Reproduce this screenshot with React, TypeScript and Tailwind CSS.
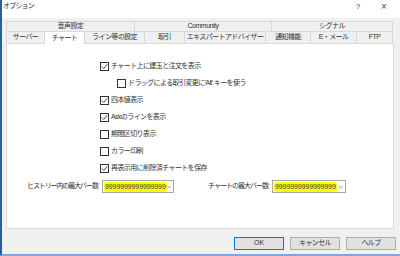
const font = "font-['Liberation_Sans','Noto_Sans_CJK_JP',sans-serif]";

function Check({ checked, label, indent }: { checked: boolean; label: string; indent?: boolean }) {
  return (
    <div className={indent ? "flex items-center h-[17px] pl-[17px]" : "flex items-center h-[17px]"}>
      <span className="w-[9px] h-[9px] border border-[#333333] bg-white flex items-center justify-center shrink-0">
        {checked && (
          <svg viewBox="0 0 7 7" className="w-[7px] h-[7px]">
            <path d="M0.8 3.6 L2.7 5.5 L6.3 1.2" stroke="#333333" strokeWidth="0.9" fill="none" />
          </svg>
        )}
      </span>
      <span className="ml-[2px] tracking-[-0.6px] whitespace-nowrap">{label}</span>
    </div>
  );
}

function Combo({ w }: { w: string }) {
  return (
    <div className={`${w} h-[13px] border border-[#a8a8a8] bg-white flex items-center pl-[1px] pr-[2px] shrink-0`}>
      <span className="bg-[#ffff00] rounded-[3px] px-[1px] leading-[10px] text-[7px] tracking-[-0.1px]">9999999999999999</span>
      <svg viewBox="0 0 6 4" className="w-[5px] h-[4px] ml-auto">
        <path d="M0.5 0.8 L3 3.2 L5.5 0.8" stroke="#555" strokeWidth="0.8" fill="none" />
      </svg>
    </div>
  );
}

const topTabs = [
  { label: "音声設定", w: "w-[129px]" },
  { label: "Community", w: "w-[137px]" },
  { label: "シグナル", w: "w-[121px]" },
];

const tabs = [
  { label: "サーバー", w: "w-[39px]" },
  { label: "チャート", w: "w-[40px]", active: true },
  { label: "ライン等の設定", w: "w-[60px]" },
  { label: "取引", w: "w-[40px]" },
  { label: "エキスパートアドバイザー", w: "w-[81px]" },
  { label: "通知機能", w: "w-[45px]" },
  { label: "E・メール", w: "w-[46px]" },
  { label: "FTP", w: "w-[36px]" },
];

export default function App() {
  return (
    <div className={`w-[400px] h-[256px] overflow-hidden bg-[#f0f0f0] border-l-2 border-l-[#2f5c9c] border-b-2 border-b-[#7aa9e0] flex flex-col text-[7px] text-[#333] ${font}`}>
      <div className="h-[13px] bg-white flex items-center shrink-0">
        <span className="pl-[1px] tracking-[-0.8px]">オプション</span>
        <span className="ml-auto w-[26px] text-center text-[8px] text-[#444]">?</span>
        <span className="w-[26px] text-center text-[10px] text-[#444] mr-[3px]">×</span>
      </div>
      <div className="h-[5px] bg-white shrink-0" />

      <div className="pt-[3px] pl-[4px] w-[392px]">
        <div className="flex h-[10px]">
          {topTabs.map((t, i) => (
            <div
              key={t.label}
              className={`${t.w} ${i === 0 ? "border-l" : ""} border-t border-r border-[#d9d9d9] flex items-center justify-center tracking-[-0.5px] whitespace-nowrap`}
            >
              {t.label}
            </div>
          ))}
        </div>
        <div className="flex h-[13px]">
          {tabs.map((t, i) => (
            <div
              key={t.label}
              className={
                t.active
                  ? `${t.w} border-t border-r border-[#d9d9d9] bg-white flex items-center justify-center tracking-[-0.6px] whitespace-nowrap`
                  : `${t.w} ${i === 0 ? "border-l" : ""} border-t border-r border-b border-[#d9d9d9] flex items-center justify-center tracking-[-0.6px] whitespace-nowrap`
              }
            >
              {t.label}
            </div>
          ))}
        </div>

        <div className="h-[185px] bg-white border border-t-0 border-[#d9d9d9] flex flex-col">
          <div className="pl-[93px] pt-[14px] flex flex-col">
            <Check checked label="チャート上に建玉と注文を表示" />
            <Check checked={false} indent label="ドラッグによる取引変更に'Alt' キーを使う" />
            <Check checked label="四本値表示" />
            <Check checked label="Askのラインを表示" />
            <Check checked={false} label="期間区切り表示" />
            <Check checked={false} label="カラー印刷" />
            <Check checked label="再表示用に削除済チャートを保存" />
          </div>
          <div className="flex items-center pl-[20px] mt-[3px]">
            <span className="w-[75px] tracking-[-1.1px] whitespace-nowrap">ヒストリー内の最大バー数</span>
            <Combo w="w-[72px]" />
            <span className="ml-[34px] w-[64px] tracking-[-1px] whitespace-nowrap">チャートの最大バー数:</span>
            <Combo w="w-[74px]" />
          </div>
        </div>
      </div>

      <div className="flex justify-end gap-[6px] pr-[4px] mt-[8px]">
        <button className="w-[50px] h-[13px] bg-[#e1e1e1] border border-[#0078d7] flex items-center justify-center">OK</button>
        <button className="w-[50px] h-[13px] bg-[#e1e1e1] border border-[#adadad] flex items-center justify-center tracking-[-0.6px]">キャンセル</button>
        <button className="w-[50px] h-[13px] bg-[#e1e1e1] border border-[#adadad] flex items-center justify-center tracking-[-0.6px]">ヘルプ</button>
      </div>
    </div>
  );
}
